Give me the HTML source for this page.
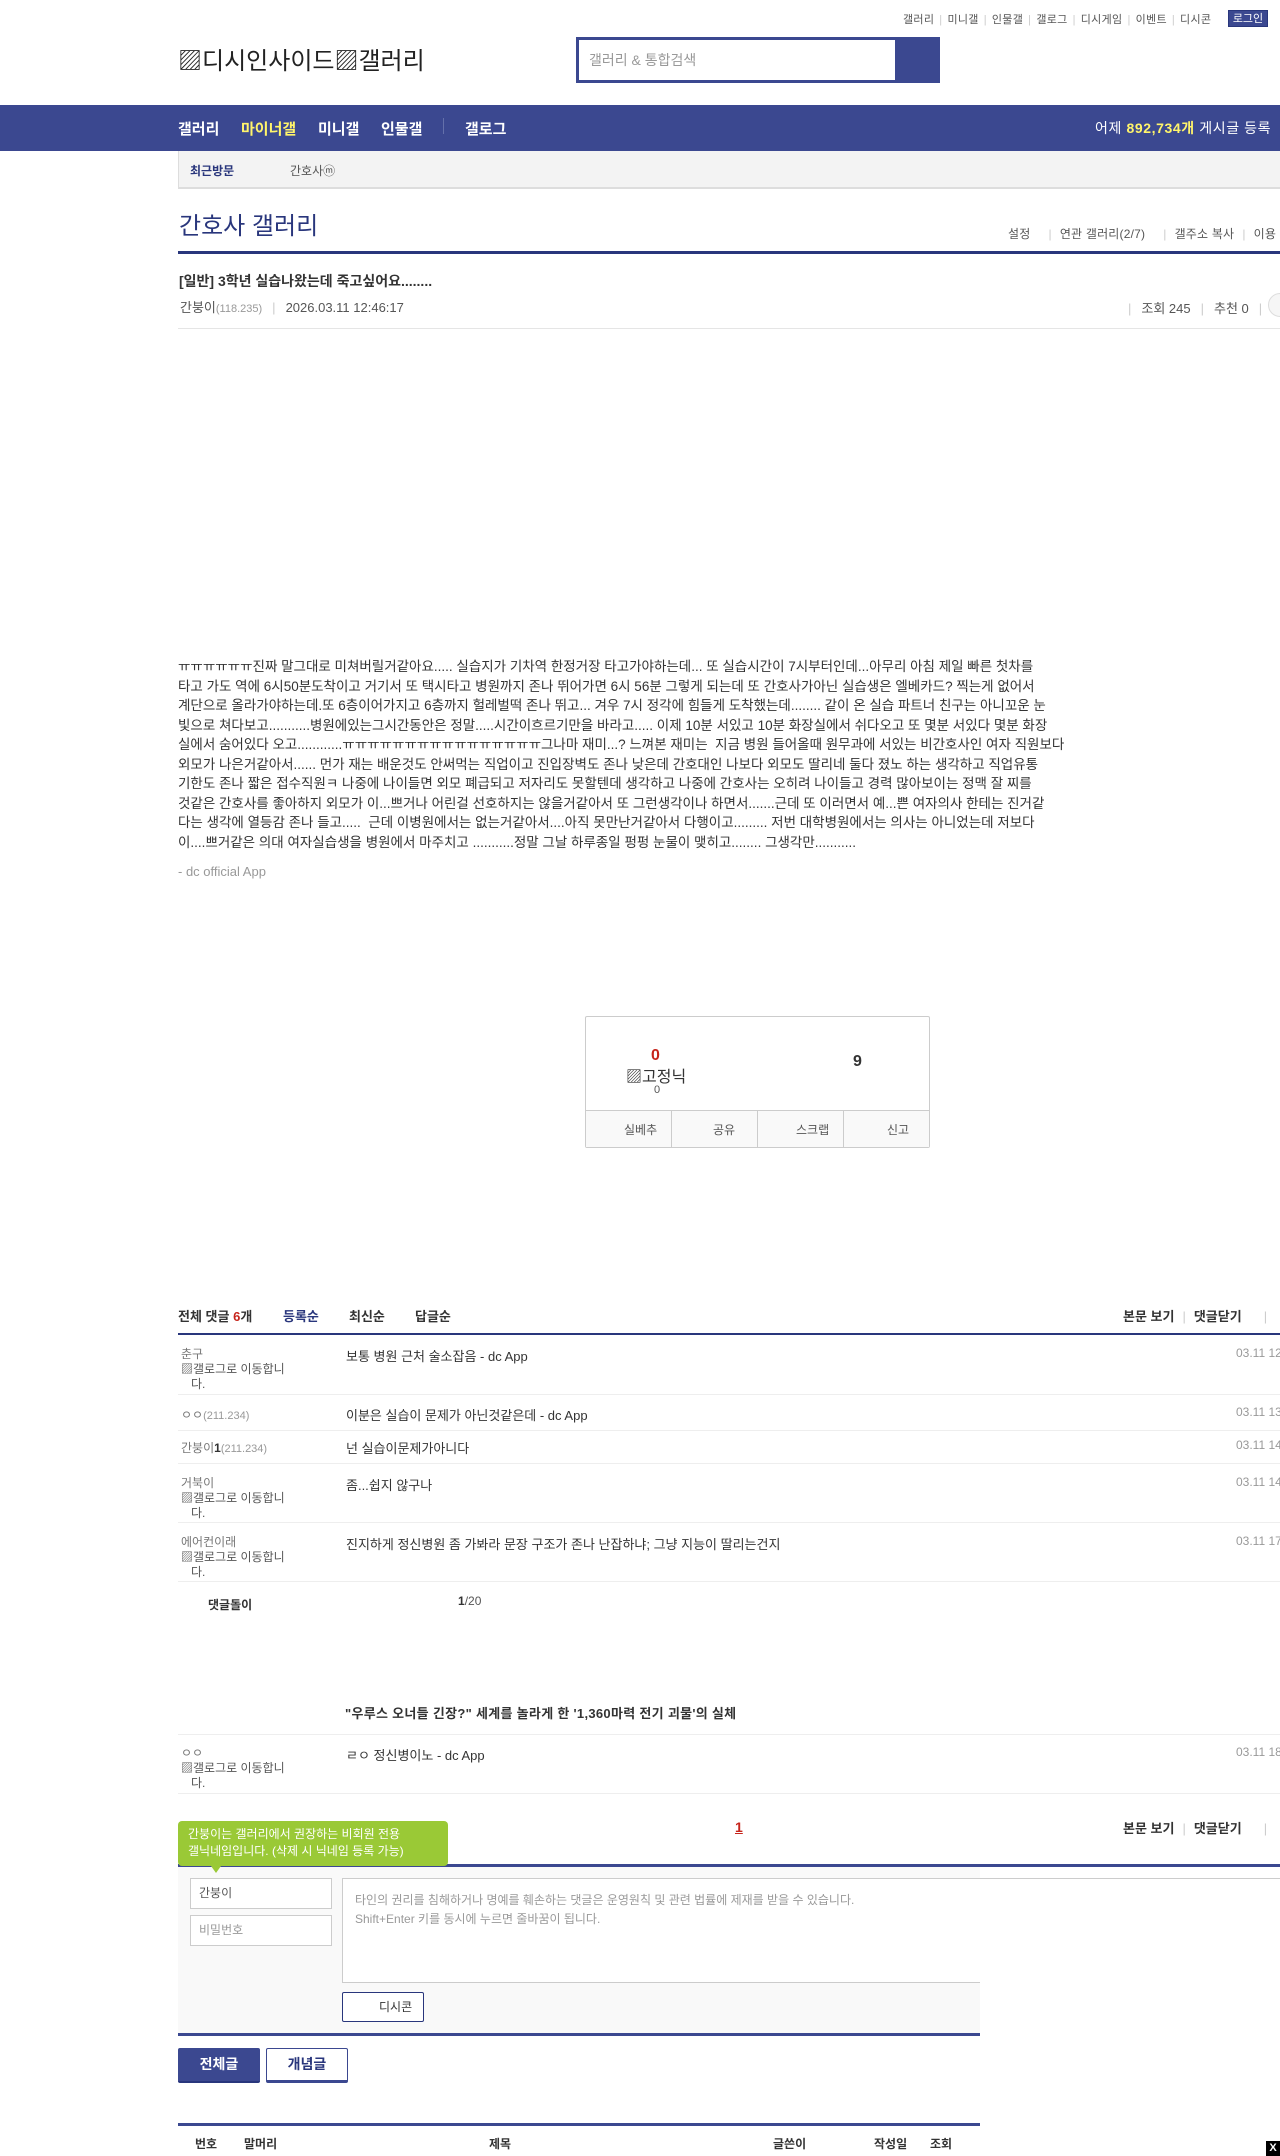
<!DOCTYPE html>
<html><head><meta charset="utf-8"><style>
*{margin:0;padding:0;box-sizing:border-box}
body{width:1280px;height:2156px;position:relative;overflow:hidden;background:#fff;font-family:"Liberation Sans","Noto Sans CJK KR",sans-serif;color:#333;font-size:13px}
.a{position:absolute;white-space:nowrap}
.navy{background:#3b4890}
.g{color:#777}
.sep{color:#ccc;margin:0 5px}
</style></head><body>
<div class="a" style="top:11px;left:903px;font-size:11px;color:#555;letter-spacing:0.3px">갤러리<span class="sep">|</span>미니갤<span class="sep">|</span>인물갤<span class="sep">|</span>갤로그<span class="sep">|</span>디시게임<span class="sep">|</span>이벤트<span class="sep">|</span>디시콘</div>
<div class="a navy" style="top:10px;left:1228px;width:40px;height:17px;color:#fff;font-size:11px;text-align:center;line-height:17px;border:1px solid #29367c">로그인</div>
<div class="a" style="top:41px;left:178px;font-size:24px;color:#222">▨디시인사이드▨갤러리</div>
<div class="a navy" style="top:37px;left:576px;width:364px;height:46px"></div>
<div class="a" style="top:40px;left:579px;width:316px;height:40px;background:#fff;color:#999;font-size:14px;line-height:40px;padding-left:10px">갤러리 &amp; 통합검색</div>
<div class="a navy" style="top:105px;left:0;width:1280px;height:46px"></div>
<div class="a" style="top:118px;left:178px;font-size:15px;font-weight:bold;color:#fff">갤러리</div>
<div class="a" style="top:118px;left:241px;font-size:15px;font-weight:bold;color:#fff46b">마이너갤</div>
<div class="a" style="top:118px;left:318px;font-size:15px;font-weight:bold;color:#fff">미니갤</div>
<div class="a" style="top:118px;left:381px;font-size:15px;font-weight:bold;color:#fff">인물갤</div>
<div class="a" style="top:118px;left:443px;width:1px;height:16px;background:#6470aa"></div>
<div class="a" style="top:118px;left:465px;font-size:15px;font-weight:bold;color:#fff">갤로그</div>
<div class="a" style="top:118px;left:1095px;font-size:14px;color:#fff;letter-spacing:0.6px">어제 <b style="color:#fff46b">892,734개</b> 게시글 등록</div>
<div class="a" style="top:151px;left:178px;width:1102px;height:38px;background:#f3f3f3;border-left:1px solid #ddd;border-bottom:2px solid #ddd"></div>
<div class="a" style="top:162px;left:190px;font-size:12px;font-weight:bold;color:#29367c">최근방문</div>
<div class="a" style="top:162px;left:290px;font-size:12px;color:#555">간호사ⓜ</div>
<div class="a" style="top:206px;left:179px;font-size:24px;color:#29367c">간호사 갤러리</div>
<div class="a" style="top:225px;left:1008px;font-size:12px;color:#555;letter-spacing:0.2px">설정<span class="sep" style="margin:0 8px 0 18px">|</span>연관 갤러리(2/7)<span class="sep" style="margin:0 8px 0 18px">|</span>갤주소 복사<span class="sep" style="margin:0 8px">|</span>이용</div>
<div class="a" style="top:251px;left:178px;width:1102px;height:3px;background:#29367c"></div>
<div class="a" style="top:271px;left:179px;font-size:14px;font-weight:bold;color:#333">[일반] 3학년 실습나왔는데 죽고싶어요........</div>
<div class="a" style="top:297px;left:180px;font-size:13px;color:#555">간붕이<span style="font-size:11px;color:#999">(118.235)</span><span class="sep" style="margin:0 10px">|</span>2026.03.11 12:46:17</div>
<div class="a" style="top:298px;left:1128px;font-size:13px;color:#555"><span class="sep" style="margin:0 10px 0 0">|</span>조회 245<span class="sep" style="margin:0 10px">|</span>추천 0<span class="sep" style="margin:0 10px">|</span></div>
<div class="a" style="top:293px;left:1268px;width:24px;height:24px;border:1px solid #ddd;border-radius:50%;background:#f6f6f6"></div>
<div class="a" style="top:328px;left:178px;width:1102px;height:1px;background:#e5e5e5"></div>
<div class="a" style="top:657px;left:178px;font-size:13.5px;line-height:19.5px;color:#333">ㅠㅠㅠㅠㅠㅠ진짜 말그대로 미쳐버릴거같아요..... 실습지가 기차역 한정거장 타고가야하는데... 또 실습시간이 7시부터인데...아무리 아침 제일 빠른 첫차를<br>타고 가도 역에 6시50분도착이고 거기서 또 택시타고 병원까지 존나 뛰어가면 6시 56분 그렇게 되는데 또 간호사가아닌 실습생은 엘베카드? 찍는게 없어서<br>계단으로 올라가야하는데.또 6층이어가지고 6층까지 헐레벌떡 존나 뛰고... 겨우 7시 정각에 힘들게 도착했는데........ 같이 온 실습 파트너 친구는 아니꼬운 눈<br>빛으로 쳐다보고...........병원에있는그시간동안은 정말.....시간이흐르기만을 바라고..... 이제 10분 서있고 10분 화장실에서 쉬다오고 또 몇분 서있다 몇분 화장<br>실에서 숨어있다 오고............ㅠㅠㅠㅠㅠㅠㅠㅠㅠㅠㅠㅠㅠㅠㅠㅠ그나마 재미...? 느껴본 재미는 &nbsp;지금 병원 들어올때 원무과에 서있는 비간호사인 여자 직원보다<br>외모가 나은거같아서...... 먼가 재는 배운것도 안써먹는 직업이고 진입장벽도 존나 낮은데 간호대인 나보다 외모도 딸리네 둘다 졌노 하는 생각하고 직업유통<br>기한도 존나 짧은 접수직원ㅋ 나중에 나이들면 외모 폐급되고 저자리도 못할텐데 생각하고 나중에 간호사는 오히려 나이들고 경력 많아보이는 정맥 잘 찌를<br>것같은 간호사를 좋아하지 외모가 이...쁘거나 어린걸 선호하지는 않을거같아서 또 그런생각이나 하면서.......근데 또 이러면서 예...쁜 여자의사 한테는 진거같<br>다는 생각에 열등감 존나 들고..... &nbsp;근데 이병원에서는 없는거같아서....아직 못만난거같아서 다행이고......... 저번 대학병원에서는 의사는 아니었는데 저보다<br>이....쁘거같은 의대 여자실습생을 병원에서 마주치고 ...........정말 그날 하루종일 펑펑 눈물이 맺히고........ 그생각만...........</div>
<div class="a" style="top:864px;left:178px;font-size:13px;color:#999">- dc official App</div>
<div class="a" style="top:1016px;left:585px;width:345px;height:132px;border:1px solid #ccc;border-radius:2px"></div>
<div class="a" style="top:1047px;left:651px;font-size:16px;font-weight:bold;color:#c6241b">0</div>
<div class="a" style="top:1063px;left:626px;font-size:16px;color:#333">▨고정닉</div>
<div class="a" style="top:1084px;left:654px;font-size:11px;color:#555">0</div>
<div class="a" style="top:1053px;left:853px;font-size:16px;font-weight:bold;color:#333">9</div>
<div class="a" style="top:1110px;left:586px;width:343px;height:37px;border-top:1px solid #ccc;background:#f9f9f9"></div>
<div class="a" style="top:1111px;left:671px;width:1px;height:36px;background:#ccc"></div>
<div class="a" style="top:1111px;left:757px;width:1px;height:36px;background:#ccc"></div>
<div class="a" style="top:1111px;left:843px;width:1px;height:36px;background:#ccc"></div>
<div class="a" style="top:1121px;left:624px;font-size:12px;color:#555">실베추</div>
<div class="a" style="top:1121px;left:713px;font-size:12px;color:#555">공유</div>
<div class="a" style="top:1121px;left:796px;font-size:12px;color:#555">스크랩</div>
<div class="a" style="top:1121px;left:887px;font-size:12px;color:#555">신고</div>
<div class="a" style="top:1306px;left:178px;font-size:13px;font-weight:bold;color:#333">전체 댓글 <span style="color:#c6241b">6</span>개</div>
<div class="a" style="top:1306px;left:283px;font-size:13px;font-weight:bold;color:#29367c">등록순</div>
<div class="a" style="top:1306px;left:349px;font-size:13px;font-weight:bold;color:#333">최신순</div>
<div class="a" style="top:1306px;left:415px;font-size:13px;font-weight:bold;color:#333">답글순</div>
<div class="a" style="top:1306px;left:1123px;font-size:13px;font-weight:bold;color:#333">본문 보기<span class="sep" style="font-weight:normal;margin:0 8px">|</span>댓글닫기<span class="sep" style="font-weight:normal;margin:0 0 0 22px">|</span></div>
<div class="a" style="top:1333px;left:178px;width:1102px;height:2px;background:#29367c"></div>
<div class="a g" style="top:1347px;left:181px;font-size:12px;line-height:15px">춘구<br><span style="color:#555">▨갤로그로 이동합니<br>&nbsp;&nbsp;&nbsp;다.</span></div>
<div class="a" style="top:1346px;left:346px">보통 병원 근처 술소잡음 - dc App</div>
<div class="a" style="top:1346px;left:1236px;font-size:12px;color:#999">03.11 12</div>
<div class="a" style="top:1394px;left:178px;width:1102px;height:1px;background:#eee"></div>
<div class="a g" style="top:1406px;left:181px;font-size:12px">ㅇㅇ<span style="font-size:11px;color:#999">(211.234)</span></div>
<div class="a" style="top:1405px;left:346px">이분은 실습이 문제가 아닌것같은데 - dc App</div>
<div class="a" style="top:1405px;left:1236px;font-size:12px;color:#999">03.11 13</div>
<div class="a" style="top:1430px;left:178px;width:1102px;height:1px;background:#eee"></div>
<div class="a g" style="top:1439px;left:181px;font-size:12px">간붕이<b style="color:#333">1</b><span style="font-size:11px;color:#999">(211.234)</span></div>
<div class="a" style="top:1438px;left:346px">넌 실습이문제가아니다</div>
<div class="a" style="top:1438px;left:1236px;font-size:12px;color:#999">03.11 14</div>
<div class="a" style="top:1463px;left:178px;width:1102px;height:1px;background:#eee"></div>
<div class="a g" style="top:1476px;left:181px;font-size:12px;line-height:15px">거북이<br><span style="color:#555">▨갤로그로 이동합니<br>&nbsp;&nbsp;&nbsp;다.</span></div>
<div class="a" style="top:1475px;left:346px">좀...쉽지 않구나</div>
<div class="a" style="top:1475px;left:1236px;font-size:12px;color:#999">03.11 14</div>
<div class="a" style="top:1522px;left:178px;width:1102px;height:1px;background:#eee"></div>
<div class="a g" style="top:1535px;left:181px;font-size:12px;line-height:15px">에어컨이래<br><span style="color:#555">▨갤로그로 이동합니<br>&nbsp;&nbsp;&nbsp;다.</span></div>
<div class="a" style="top:1534px;left:346px">진지하게 정신병원 좀 가봐라 문장 구조가 존나 난잡하냐; 그냥 지능이 딸리는건지</div>
<div class="a" style="top:1534px;left:1236px;font-size:12px;color:#999">03.11 17</div>
<div class="a" style="top:1581px;left:178px;width:1102px;height:1px;background:#eee"></div>
<div class="a" style="top:1596px;left:208px;font-size:12px;font-weight:bold">댓글돌이</div>
<div class="a" style="top:1594px;left:458px;font-size:12px;color:#555"><b style="color:#333">1</b>/20</div>
<div class="a" style="top:1703px;left:345px;font-size:13px;font-weight:bold;letter-spacing:0.3px">"우루스 오너들 긴장?" 세계를 놀라게 한 '1,360마력 전기 괴물'의 실체</div>
<div class="a" style="top:1734px;left:178px;width:1102px;height:1px;background:#eee"></div>
<div class="a g" style="top:1746px;left:181px;font-size:12px;line-height:15px">ㅇㅇ<br><span style="color:#555">▨갤로그로 이동합니<br>&nbsp;&nbsp;&nbsp;다.</span></div>
<div class="a" style="top:1745px;left:346px">ㄹㅇ 정신병이노 - dc App</div>
<div class="a" style="top:1745px;left:1236px;font-size:12px;color:#999">03.11 18</div>
<div class="a" style="top:1793px;left:178px;width:1102px;height:1px;background:#eee"></div>
<div class="a" style="top:1819px;left:735px;font-size:14px;font-weight:bold;color:#c6241b;text-decoration:underline">1</div>
<div class="a" style="top:1818px;left:1123px;font-size:13px;font-weight:bold;color:#333">본문 보기<span class="sep" style="font-weight:normal;margin:0 8px">|</span>댓글닫기<span class="sep" style="font-weight:normal;margin:0 0 0 22px">|</span></div>
<div class="a" style="top:1864px;left:178px;width:1102px;height:3px;background:#3b4890"></div>
<div class="a" style="top:1867px;left:178px;width:802px;height:166px;background:#f9f9f9"></div>
<div class="a" style="top:1821px;left:178px;width:270px;height:45px;background:#9ac936;border-radius:4px;color:#fff;font-size:12px;line-height:17px;padding:5px 0 0 10px">간붕이는 갤러리에서 권장하는 비회원 전용<br>갤닉네임입니다. (삭제 시 닉네임 등록 가능)</div>
<div class="a" style="top:1866px;left:211px;width:0;height:0;border-left:5px solid transparent;border-right:5px solid transparent;border-top:7px solid #9ac936"></div>
<div class="a" style="top:1878px;left:190px;width:142px;height:31px;border:1px solid #ccc;background:#fff;font-size:12px;color:#555;line-height:29px;padding-left:8px">간붕이</div>
<div class="a" style="top:1915px;left:190px;width:142px;height:31px;border:1px solid #ccc;background:#fff;font-size:12px;color:#999;line-height:29px;padding-left:8px">비밀번호</div>
<div class="a" style="top:1878px;left:342px;width:960px;height:105px;border:1px solid #ccc;background:#fff;font-size:12px;color:#999;line-height:19px;padding:12px 12px">타인의 권리를 침해하거나 명예를 훼손하는 댓글은 운영원칙 및 관련 법률에 제재를 받을 수 있습니다.<br>Shift+Enter 키를 동시에 누르면 줄바꿈이 됩니다.</div>
<div class="a" style="top:1878px;left:980px;width:300px;height:110px;background:#fff"></div>
<div class="a" style="top:1878px;left:980px;width:300px;height:1px;background:#ccc"></div>
<div class="a" style="top:1992px;left:342px;width:82px;height:30px;border:1px solid #29367c;border-radius:2px;background:#fff;font-size:12px;color:#333;line-height:28px;padding-left:36px">디시콘</div>
<div class="a" style="top:2033px;left:178px;width:802px;height:3px;background:#3b4890"></div>
<div class="a navy" style="top:2048px;left:178px;width:82px;height:35px;border-radius:2px;border-bottom:2px solid #29367c;color:#fff;font-size:14px;font-weight:bold;text-align:center;line-height:33px">전체글</div>
<div class="a" style="top:2048px;left:266px;width:82px;height:35px;border:1px solid #3b4890;border-bottom:3px solid #3b4890;border-radius:2px;color:#29367c;font-size:14px;font-weight:bold;text-align:center;line-height:31px">개념글</div>
<div class="a" style="top:2123px;left:178px;width:802px;height:3px;background:#3b4890"></div>
<div class="a" style="top:2135px;left:195px;font-size:12px;font-weight:bold">번호</div>
<div class="a" style="top:2135px;left:244px;font-size:12px;font-weight:bold">말머리</div>
<div class="a" style="top:2135px;left:489px;font-size:12px;font-weight:bold">제목</div>
<div class="a" style="top:2135px;left:773px;font-size:12px;font-weight:bold">글쓴이</div>
<div class="a" style="top:2135px;left:874px;font-size:12px;font-weight:bold">작성일</div>
<div class="a" style="top:2135px;left:930px;font-size:12px;font-weight:bold">조회</div>
<div class="a" style="top:2141px;left:1266px;width:14px;height:15px;background:#000;color:#fff;font-size:11px;font-weight:bold;text-align:center;line-height:15px">X</div>
</body></html>
